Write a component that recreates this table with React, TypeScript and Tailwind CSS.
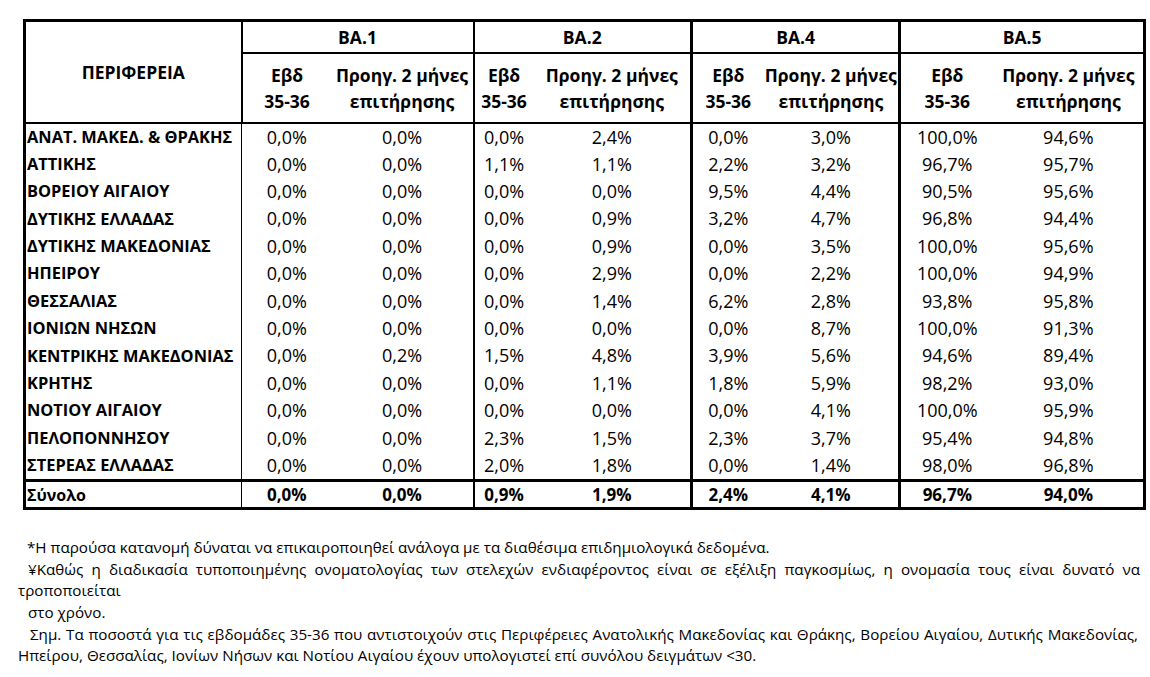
const rows: [string, string[]][] = [
  ['ΑΝΑΤ. ΜΑΚΕΔ. & ΘΡΑΚΗΣ', ['0,0%', '0,0%', '0,0%', '2,4%', '0,0%', '3,0%', '100,0%', '94,6%']],
  ['ΑΤΤΙΚΗΣ', ['0,0%', '0,0%', '1,1%', '1,1%', '2,2%', '3,2%', '96,7%', '95,7%']],
  ['ΒΟΡΕΙΟΥ ΑΙΓΑΙΟΥ', ['0,0%', '0,0%', '0,0%', '0,0%', '9,5%', '4,4%', '90,5%', '95,6%']],
  ['ΔΥΤΙΚΗΣ ΕΛΛΑΔΑΣ', ['0,0%', '0,0%', '0,0%', '0,9%', '3,2%', '4,7%', '96,8%', '94,4%']],
  ['ΔΥΤΙΚΗΣ ΜΑΚΕΔΟΝΙΑΣ', ['0,0%', '0,0%', '0,0%', '0,9%', '0,0%', '3,5%', '100,0%', '95,6%']],
  ['ΗΠΕΙΡΟΥ', ['0,0%', '0,0%', '0,0%', '2,9%', '0,0%', '2,2%', '100,0%', '94,9%']],
  ['ΘΕΣΣΑΛΙΑΣ', ['0,0%', '0,0%', '0,0%', '1,4%', '6,2%', '2,8%', '93,8%', '95,8%']],
  ['ΙΟΝΙΩΝ ΝΗΣΩΝ', ['0,0%', '0,0%', '0,0%', '0,0%', '0,0%', '8,7%', '100,0%', '91,3%']],
  ['ΚΕΝΤΡΙΚΗΣ ΜΑΚΕΔΟΝΙΑΣ', ['0,0%', '0,2%', '1,5%', '4,8%', '3,9%', '5,6%', '94,6%', '89,4%']],
  ['ΚΡΗΤΗΣ', ['0,0%', '0,0%', '0,0%', '1,1%', '1,8%', '5,9%', '98,2%', '93,0%']],
  ['ΝΟΤΙΟΥ ΑΙΓΑΙΟΥ', ['0,0%', '0,0%', '0,0%', '0,0%', '0,0%', '4,1%', '100,0%', '95,9%']],
  ['ΠΕΛΟΠΟΝΝΗΣΟΥ', ['0,0%', '0,0%', '2,3%', '1,5%', '2,3%', '3,7%', '95,4%', '94,8%']],
  ['ΣΤΕΡΕΑΣ ΕΛΛΑΔΑΣ', ['0,0%', '0,0%', '2,0%', '1,8%', '0,0%', '1,4%', '98,0%', '96,8%']],
]

const total = ['0,0%', '0,0%', '0,9%', '1,9%', '2,4%', '4,1%', '96,7%', '94,0%']

// right border of each value column
const valueBorders = [
  '',
  'border-r-2 border-black',
  '',
  'border-r-[3px] border-black',
  '',
  'border-r-[3px] border-black',
  '',
  '',
]

const groups = ['ΒΑ.1', 'ΒΑ.2', 'ΒΑ.4', 'ΒΑ.5']
const groupBorders = [
  'border-r-2',
  'border-r-[3px]',
  'border-r-[3px]',
  '',
]

export default function App() {
  return (
    <div className="min-h-[677px] w-[1150px] bg-white pt-[19px] text-black [font-family:'Open_Sans','Noto_Sans',sans-serif]">
      <table className="ml-[23px] w-[1120px] table-fixed border-collapse border-[3px] border-black text-[18px]">
        <colgroup>
          <col className="w-[217px]" />
          <col className="w-[90px]" />
          <col className="w-[142px]" />
          <col className="w-[60px]" />
          <col className="w-[158px]" />
          <col className="w-[72px]" />
          <col className="w-[136px]" />
          <col className="w-[94px]" />
          <col className="w-[151px]" />
        </colgroup>
        <thead className="text-[17.5px]">
          <tr className="h-[32px]">
            <th rowSpan={2} className="border-r-2 border-b-2 border-black text-center font-bold">
              ΠΕΡΙΦΕΡΕΙΑ
            </th>
            {groups.map((g, i) => (
              <th
                key={g}
                colSpan={2}
                className={`border-b-2 border-black text-center font-bold ${groupBorders[i]}`}
              >
                {g}
              </th>
            ))}
          </tr>
          <tr className="h-[70px]">
            {groups.map((g, i) => (
              <>
                <th key={g + 'a'} className="border-b-2 border-black text-center font-bold leading-[26px]">
                  Εβδ
                  <br />
                  35-36
                </th>
                <th
                  key={g + 'b'}
                  className={`whitespace-nowrap border-b-2 border-black text-center font-bold leading-[26px] ${groupBorders[i]}`}
                >
                  Προηγ. 2 μήνες
                  <br />
                  επιτήρησης
                </th>
              </>
            ))}
          </tr>
        </thead>
        <tbody>
          {rows.map(([name, vals]) => (
            <tr key={name} className="h-[27.4px]">
              <td className="whitespace-nowrap border-r border-black pl-px text-left text-[16.4px] font-bold">{name}</td>
              {vals.map((v, i) => (
                <td key={i} className={`text-center ${valueBorders[i]}`}>
                  {v}
                </td>
              ))}
            </tr>
          ))}
          <tr className="h-[28px] border-t-[3px] border-black text-[17px] font-bold">
            <td className="border-r border-black pl-px text-left text-[16px]">Σύνολο</td>
            {total.map((v, i) => (
              <td key={i} className={`text-center ${valueBorders[i]}`}>
                {v}
              </td>
            ))}
          </tr>
        </tbody>
      </table>

      {/* Footnotes */}
      <div className="ml-[18px] mt-[27px] w-[1122px] text-[15.2px] leading-[21.6px]">
        <div className="pl-[9px]">*Η παρούσα κατανομή δύναται να επικαιροποιηθεί ανάλογα με τα διαθέσιμα επιδημιολογικά δεδομένα.</div>
        <div className="whitespace-nowrap pl-[10px] text-justify [text-align-last:justify]">
          ¥Καθώς η διαδικασία τυποποιημένης ονοματολογίας των στελεχών ενδιαφέροντος είναι σε εξέλιξη παγκοσμίως, η ονομασία τους είναι δυνατό να
        </div>
        <div>τροποποιείται</div>
        <div className="pl-[10px]">στο χρόνο.</div>
        <div className="whitespace-nowrap pl-[12px] pr-[2px] text-justify [text-align-last:justify]">
          Σημ. Τα ποσοστά για τις εβδομάδες 35-36 που αντιστοιχούν στις Περιφέρειες Ανατολικής Μακεδονίας και Θράκης, Βορείου Αιγαίου, Δυτικής Μακεδονίας,
        </div>
        <div>Ηπείρου, Θεσσαλίας, Ιονίων Νήσων και Νοτίου Αιγαίου έχουν υπολογιστεί επί συνόλου δειγμάτων &lt;30.</div>
      </div>
    </div>
  )
}
